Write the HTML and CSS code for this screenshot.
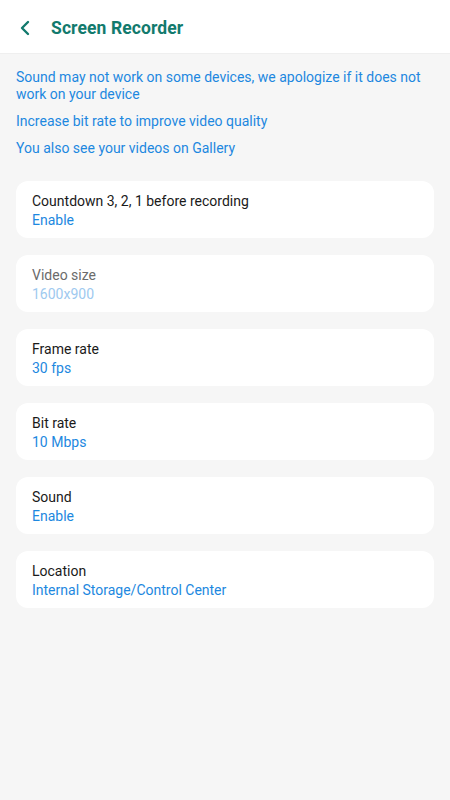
FILE: index.html
```html
<!DOCTYPE html>
<html>
<head>
<meta charset="utf-8">
<link rel="stylesheet" href="styles.css">
</head>
<body>
<header class="appbar">
  <svg class="back" width="14" height="16" viewBox="0 0 14 16"><path d="M10 2 L4 8 L10 14" fill="none" stroke="#127a6d" stroke-width="2.4" stroke-linecap="round" stroke-linejoin="round"/></svg>
  <h1 class="title">Screen Recorder</h1>
</header>
<main class="content">
  <div class="notes">
    <p class="note">Sound may not work on some devices, we apologize if it does not work on your device</p>
    <p class="note">Increase bit rate to improve video quality</p>
    <p class="note">You also see your videos on Gallery</p>
  </div>
  <div class="list">
    <div class="card"><div class="label">Countdown 3, 2, 1 before recording</div><div class="value">Enable</div></div>
    <div class="card disabled"><div class="label">Video size</div><div class="value">1600x900</div></div>
    <div class="card"><div class="label">Frame rate</div><div class="value">30 fps</div></div>
    <div class="card"><div class="label">Bit rate</div><div class="value">10 Mbps</div></div>
    <div class="card"><div class="label">Sound</div><div class="value">Enable</div></div>
    <div class="card"><div class="label">Location</div><div class="value">Internal Storage/Control Center</div></div>
  </div>
</main>
</body>
</html>
```
FILE: styles.css
```css
* { box-sizing: border-box; }
html, body { margin: 0; padding: 0; }
body {
  width: 450px;
  min-height: 800px;
  background: #f6f6f6;
  font-family: Roboto, "Noto Sans", sans-serif;
}
.appbar {
  height: 54px;
  background: #ffffff;
  border-bottom: 1px solid #efefef;
  display: flex;
  align-items: center;
  padding-left: 18px;
  padding-top: 2px;
}
.title {
  margin: 0 0 0 19px;
  font-size: 17.5px;
  font-weight: 700;
  color: #127a6d;
  letter-spacing: 0.1px;
}
.content { padding: 15px 16px 0; }
.notes { display: flex; flex-direction: column; gap: 10px; }
.note {
  margin: 0;
  font-size: 14px;
  line-height: 17px;
  color: #1d88e0;
}
.list {
  margin-top: 24px;
  display: flex;
  flex-direction: column;
  gap: 17px;
}
.card {
  background: #ffffff;
  border-radius: 12px;
  padding: 11px 16px 7px;
  height: 57px;
}
.label { font-size: 14px; line-height: 19px; color: #1a1a1a; }
.value { font-size: 14px; line-height: 19px; color: #1d88e0; }
.disabled .label { color: #6b6b6b; }
.disabled .value { color: #9ec9ef; }
```
